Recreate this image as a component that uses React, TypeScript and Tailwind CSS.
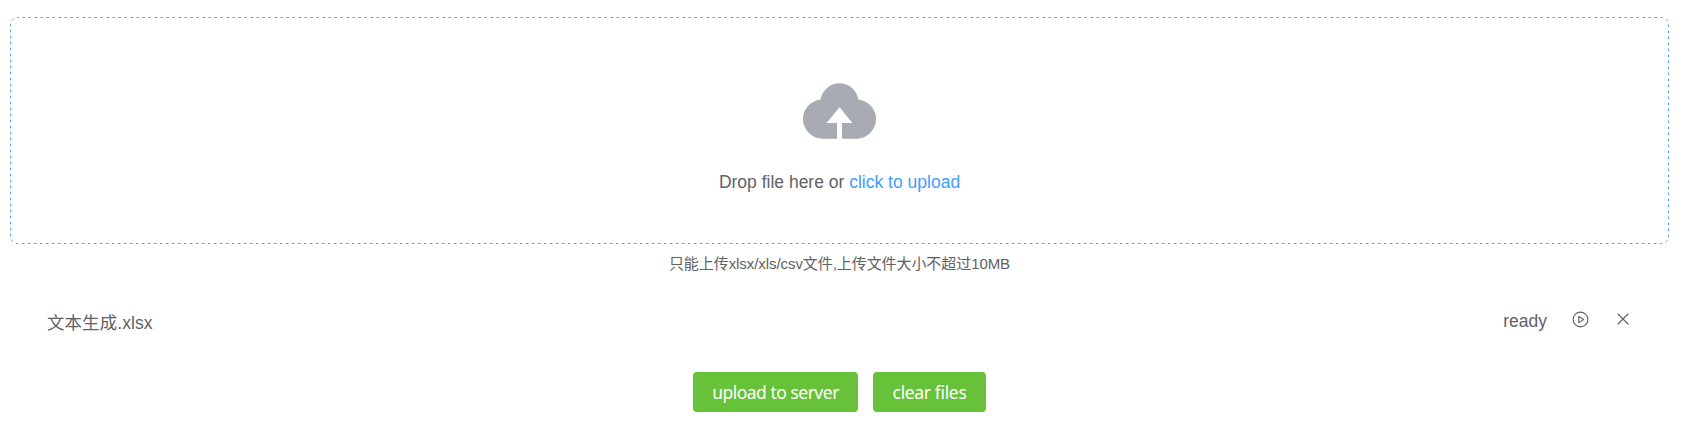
import React from "react";

function CloudUpload() {
  return (
    <svg width="75" height="56" viewBox="0 0 75 56" className="block" fill="#a8abb2">
      <path d="M18.6 16.6A19.1 19.1 0 0 1 56.4 16.6A19.6 19.6 0 0 1 54.8 55.7H40V40H50.4L37.5 24.2L24.6 40H35V55.7H20.2A19.6 19.6 0 0 1 18.6 16.6Z" />
    </svg>
  );
}

function PlayIcon() {
  return (
    <svg width="17" height="17" viewBox="0 0 17 17" fill="none" stroke="#606266" strokeWidth="1.1">
      <circle cx="8.5" cy="8.5" r="7.4" />
      <path d="M6.8 5.4V11.6L11.6 8.5Z" strokeLinejoin="round" />
    </svg>
  );
}

function CloseIcon() {
  return (
    <svg width="12" height="12" viewBox="0 0 12 12" fill="none" stroke="#606266" strokeWidth="1.15" strokeLinecap="round">
      <path d="M1 1L11 11M11 1L1 11" />
    </svg>
  );
}

function DashedOutline() {
  return (
    <svg className="pointer-events-none absolute inset-0" width="1659" height="228" fill="none">
      <rect x="0.5" y="0.5" width="1658" height="226" rx="7" stroke="#409eff" strokeDasharray="2.5 3.5" strokeDashoffset="1" />
    </svg>
  );
}

export default function App() {
  return (
    <div className="h-[423px] w-full overflow-hidden bg-white pt-[17px] font-['Liberation_Sans','Noto_Sans_CJK_SC',sans-serif] text-[#606266]">
      <div className="relative ml-[10px] flex h-[228px] w-[1659px] flex-col items-center rounded-[7px] pt-[66px]">
        <DashedOutline />
        <CloudUpload />
        <p className="mt-[31px] whitespace-nowrap text-[17.5px] leading-[24px]">
          Drop file here or <span className="text-[#409eff]">click to upload</span>
        </p>
      </div>
      <p className="ml-[10px] mt-[9px] w-[1659px] text-center text-[15px] leading-[20px] tracking-[-0.07px]">
        只能上传xlsx/xls/csv文件,上传文件大小不超过10MB
      </p>
      <div className="ml-[47px] mt-[32px] flex h-[30px] w-[1582px] items-center text-[17.5px]">
        <span className="pt-[5px] tracking-[0.06px]">文本生成.xlsx</span>
        <span className="ml-auto">ready</span>
        <span className="mb-[4px] ml-[25px]"><PlayIcon /></span>
        <span className="mb-[4px] ml-[28px]"><CloseIcon /></span>
      </div>
      <div className="ml-[693px] mt-[36px] flex gap-[15px] font-['Noto_Sans',sans-serif] text-[17.5px] text-white">
        <button className="h-[40px] w-[165px] rounded-[4px] bg-[#67c23a] pt-px tracking-[-0.5px]">upload to server</button>
        <button className="h-[40px] w-[113px] rounded-[4px] bg-[#67c23a] pt-px tracking-[-0.35px]">clear files</button>
      </div>
    </div>
  );
}
